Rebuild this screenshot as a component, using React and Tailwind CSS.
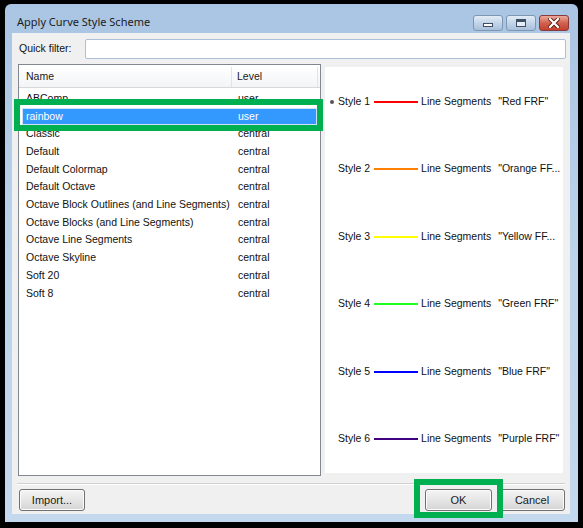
import React from 'react';

const schemes = [
  ['ABComp', 'user'],
  ['rainbow', 'user'],
  ['Classic', 'central'],
  ['Default', 'central'],
  ['Default Colormap', 'central'],
  ['Default Octave', 'central'],
  ['Octave Block Outlines (and Line Segments)', 'central'],
  ['Octave Blocks (and Line Segments)', 'central'],
  ['Octave Line Segments', 'central'],
  ['Octave Skyline', 'central'],
  ['Soft 20', 'central'],
  ['Soft 8', 'central'],
];

const styles = [
  { name: 'Style 1', color: 'bg-[#ff0000]', label: '"Red FRF"', dot: true },
  { name: 'Style 2', color: 'bg-[#ff8000]', label: '"Orange FF...' },
  { name: 'Style 3', color: 'bg-[#ffff00]', label: '"Yellow FF...' },
  { name: 'Style 4', color: 'bg-[#22ff22]', label: '"Green FRF"' },
  { name: 'Style 5', color: 'bg-[#0000ff]', label: '"Blue FRF"' },
  { name: 'Style 6', color: 'bg-[#400080]', label: '"Purple FRF"' },
];

const font = "font-['Liberation_Sans',Arial,sans-serif]";

const CaptionButton = ({ red, children }) => (
  <div
    className={
      'w-[30px] h-[16px] rounded-[3px] border flex items-center justify-center ' +
      (red
        ? 'border-[#8a3a3a] bg-gradient-to-b from-[#e9a99b] via-[#d2614f] to-[#c4412f]'
        : 'border-[#7d97b3] bg-gradient-to-b from-[#e2ecf6] via-[#c3d5e8] to-[#a9c0da]')
    }
  >
    {children}
  </div>
);

const WinButton = ({ children, className = '' }) => (
  <div
    className={
      'h-[22px] rounded-[3px] border border-[#707070] bg-gradient-to-b from-[#f4f4f4] via-[#e6e6e6] to-[#d4d4d4] flex items-center justify-center text-[11px] text-[#1a1a1a] shadow-[inset_0_0_0_1px_#fcfcfc] ' +
      className
    }
  >
    {children}
  </div>
);

export default function App() {
  return (
    <div className={`relative w-[583px] h-[528px] bg-black overflow-hidden pt-[4px] pl-[5px] ${font}`}>
      {/* window */}
      <div className="w-[573px] h-[518px] rounded-t-[6px] bg-gradient-to-b from-[#a9c5e3] via-[#bcd3eb] to-[#c4d8ee] flex flex-col">
        {/* title bar */}
        <div className="h-[29px] pt-[8px] pl-[12px] pr-[9px] flex items-center">
          <span className="text-[11px] text-[#1b1b1b] font-['Noto_Sans',sans-serif] flex-1">Apply Curve Style Scheme</span>
          <div className="flex gap-[3px]">
            <CaptionButton>
              <div className="mt-[5px] w-[10px] h-[4px] border border-[#3f4f63] bg-white" />
            </CaptionButton>
            <CaptionButton>
              <div className="w-[10px] h-[8px] border border-[#3f4f63] border-t-[3px] bg-white/60" />
            </CaptionButton>
            <CaptionButton red>
              <svg width="12" height="10" viewBox="0 0 12 10">
                <path d="M2 1 L10 9 M10 1 L2 9" stroke="#5a1a12" strokeWidth="4" strokeLinecap="square" />
                <path d="M2 1 L10 9 M10 1 L2 9" stroke="#ffffff" strokeWidth="2.2" strokeLinecap="square" />
              </svg>
            </CaptionButton>
          </div>
        </div>

        {/* content */}
        <div className="ml-[7px] mr-[8px] h-[481px] bg-[#f0f0f0] flex flex-col">
          {/* quick filter */}
          <div className="mt-[6px] h-[20px] flex items-center">
            <span className="ml-[7px] w-[66px] text-[10.5px] text-[#111]">Quick filter:</span>
            <div className="w-[481px] h-[20px] bg-white border border-[#abc0d6] rounded-[2px]" />
          </div>

          {/* panels */}
          <div className="mt-[5px] flex">
            {/* scheme list */}
            <div className="ml-[6px] w-[303px] h-[412px] bg-white border border-[#828790]">
              <div className="h-[23px] pt-[2px] flex text-[10.5px] text-[#1a1a1a] bg-gradient-to-b from-white to-[#f3f4f6] border-b border-[#d8d8d8]">
                <div className="w-[213px] pl-[7px] flex items-center border-r border-[#e3e3e3]">Name</div>
                <div className="w-[86px] pl-[5px] flex items-center border-r border-[#e3e3e3]">Level</div>
              </div>
              <div className="pt-[2px] px-[3px]">
                {schemes.map(([name, level]) => {
                  const sel = name === 'rainbow';
                  return (
                    <div
                      key={name}
                      className={
                        'h-[17.7px] flex items-center text-[10.5px] ' +
                        (sel ? 'bg-[#3399ff] text-white outline outline-1 outline-[#cde3fa] -outline-offset-1' : 'text-[#111]')
                      }
                    >
                      <span className="w-[216px] pl-[4px] whitespace-nowrap">{name}</span>
                      <span>{level}</span>
                    </div>
                  );
                })}
              </div>
            </div>

            {/* style preview */}
            <div className="ml-[4px] mt-[3px] w-[238px] h-[406px] bg-white pt-[1px]">
              {styles.map((s) => (
                <div key={s.name} className="h-[67.5px] flex items-center pl-[5px] text-[10.5px] text-[#111] whitespace-nowrap">
                  <div className={'w-[4px] h-[4px] rounded-full ' + (s.dot ? 'bg-[#555]' : '')} />
                  <span className="ml-[4px]">{s.name}</span>
                  <div className={'ml-[4px] w-[44px] h-[2px] ' + s.color} />
                  <span className="ml-[3px]">Line Segments</span>
                  <span className="ml-[7px]">{s.label}</span>
                </div>
              ))}
            </div>
          </div>

          {/* separator */}
          <div className="mt-[7px] ml-[5px] w-[548px] h-[2px] border-t border-[#d0d0d0] border-b border-b-white" />

          {/* buttons */}
          <div className="mt-[4px] flex">
            <WinButton className="ml-[7px] w-[66px]">Import...</WinButton>
            <WinButton className="ml-[340px] w-[67px]">OK</WinButton>
            <WinButton className="ml-[7px] w-[66px]">Cancel</WinButton>
          </div>
        </div>
      </div>

      {/* annotation boxes */}
      <div className="absolute left-[14px] top-[99px] w-[309px] h-[32px] border-[6px] border-[#00b050]" />
      <div className="absolute left-[414px] top-[479px] w-[89px] h-[39px] border-[6px] border-[#00b050]" />
    </div>
  );
}
